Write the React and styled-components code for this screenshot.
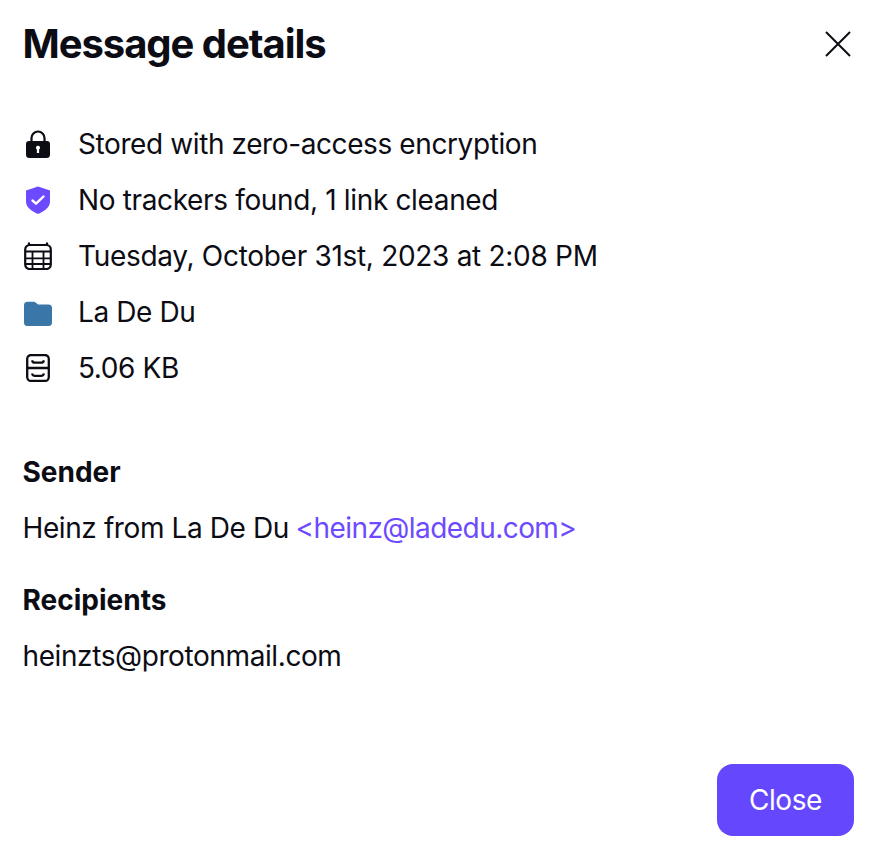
import React from "react"
import styled, { createGlobalStyle } from "styled-components"

const GlobalStyle = createGlobalStyle`
  html, body {
    margin: 0;
    padding: 0;
    background: #fff;
  }
`

const LockIcon = () => (
  <svg width="28" height="28" viewBox="0 0 28 28">
    <path d="M7.500 12V8a6.500 6.500 0 0 1 13 0v4" fill="none" stroke="#0c0c14" strokeWidth="2.200" />
    <path
      fillRule="evenodd"
      fill="#0c0c14"
      d="M5 11h18a3 3 0 0 1 3 3v10.500a3.500 3.500 0 0 1-3.500 3.500h-17A3.500 3.500 0 0 1 2 24.500V14a3 3 0 0 1 3-3zM14 15.800a2 2 0 0 0-1.100 3.700V23h2.200v-3.500A2 2 0 0 0 14 15.800z"
    />
  </svg>
)

const ShieldIcon = () => (
  <svg width="28" height="28" viewBox="0 0 28 28">
    <path fill="#6d4aff" d="M14 .5 26 4.500v11c0 6-6 10-12 12.500-6-2.500-12-6.500-12-12.500v-11z" />
    <path d="M8.500 14.500l3.500 3.200 7.500-7.200" fill="none" stroke="#fff" strokeWidth="2.400" strokeLinecap="round" strokeLinejoin="round" />
  </svg>
)

const CalendarIcon = () => (
  <svg width="28" height="28" viewBox="0 0 28 28" fill="none" stroke="#0c0c14" strokeWidth="2.200">
    <rect x="1.200" y="3" width="25.600" height="24" rx="4.500" />
    <path strokeWidth="1.800" d="M1.200 9.500h25.600M1.200 16.300h25.600M1.200 22h25.600M8.500 9.500V27M19.500 9.500V27" />
    <path d="M5 .5v3M23 .5v3" />
  </svg>
)

const FolderIcon = () => (
  <svg width="28" height="28" viewBox="0 0 28 28">
    <path
      fill="#3a77a8"
      d="M3.500 3.700h5.500c1.700 0 2.600.6 3.600 1.500l1.400 1.300h10.500a3.500 3.500 0 0 1 3.500 3.500v14.500a3.500 3.500 0 0 1-3.500 3.500h-21a3.500 3.500 0 0 1-3.500-3.500V7.200a3.500 3.500 0 0 1 3.500-3.500z"
    />
  </svg>
)

const DrawerIcon = () => (
  <svg width="28" height="28" viewBox="0 0 28 28" fill="none" stroke="#0c0c14" strokeWidth="2.300">
    <rect x="3.200" y="1" width="21.600" height="26" rx="4" />
    <path d="M3.200 14h21.600M8 6.300c.5 1.500 1.500 2.400 3 2.400h6c1.500 0 2.500-.9 3-2.400M8 19.500c.5 1.500 1.500 2.400 3 2.400h6c1.500 0 2.500-.9 3-2.400" />
  </svg>
)

const CloseIcon = () => (
  <svg width="26" height="26" viewBox="0 0 26 26" fill="none" stroke="#0c0c14" strokeWidth="2">
    <path d="M1 1l24 24M25 1L1 25" />
  </svg>
)

const details = [
  { icon: <LockIcon />, text: "Stored with zero-access encryption" },
  { icon: <ShieldIcon />, text: "No trackers found, 1 link cleaned", spacing: "-0.35px" },
  { icon: <CalendarIcon />, text: "Tuesday, October 31st, 2023 at 2:08 PM", spacing: "-0.3px" },
  { icon: <FolderIcon />, text: "La De Du" },
  { icon: <DrawerIcon />, text: "5.06 KB" },
]

export default function App() {
  return (
    <>
      <GlobalStyle />
      <Modal>
        <Header>
          <Title>Message details</Title>
          <IconButton aria-label="Close">
            <CloseIcon />
          </IconButton>
        </Header>
        <DetailList>
          {details.map((item) => (
            <DetailRow key={item.text} $spacing={item.spacing}>
              <IconSlot>{item.icon}</IconSlot>
              <span>{item.text}</span>
            </DetailRow>
          ))}
        </DetailList>
        <Section>
          <Label>Sender</Label>
          <Line>
            Heinz from La De Du <Address>&lt;heinz@ladedu.com&gt;</Address>
          </Line>
        </Section>
        <Section $gap="16px">
          <Label>Recipients</Label>
          <Line>heinzts@protonmail.com</Line>
        </Section>
        <Footer>
          <PrimaryButton>Close</PrimaryButton>
        </Footer>
      </Modal>
    </>
  )
}

const Modal = styled.div`
  box-sizing: border-box;
  width: 873px;
  height: 859px;
  padding: 16px 19px 23px 22.5px;
  display: flex;
  flex-direction: column;
  background: #fff;
  color: #0c0c14;
  font-family: Inter, "Liberation Sans", sans-serif;
  font-size: 28px;
  letter-spacing: -0.4px;
`
const Header = styled.div`
  display: flex;
  align-items: center;
  justify-content: space-between;
  height: 56px;
`
const Title = styled.h1`
  margin: 0;
  font-size: 40px;
  line-height: 56px;
  font-weight: 700;
  letter-spacing: -1.05px;
`
const IconButton = styled.button`
  display: flex;
  padding: 0;
  margin-right: 3px;
  border: 0;
  background: none;
`
const DetailList = styled.div`
  display: flex;
  flex-direction: column;
  margin-top: 44px;
`
const DetailRow = styled.div`
  display: flex;
  align-items: center;
  gap: 26px;
  height: 56px;
  line-height: 56px;
  letter-spacing: ${(props) => props.$spacing || "inherit"};
`
const IconSlot = styled.span`
  display: flex;
  width: 28px;
  height: 28px;
  margin-left: 1.5px;
`
const Section = styled.div`
  margin-top: ${(props) => props.$gap || "48px"};
`
const Label = styled.div`
  font-weight: 700;
  line-height: 56px;
  letter-spacing: 0;
`
const Line = styled.div`
  line-height: 56px;
`
const Address = styled.span`
  margin-left: -1px;
  color: #6d4aff;
  letter-spacing: -0.55px;
`
const Footer = styled.div`
  margin-top: auto;
  display: flex;
  justify-content: flex-end;
`
const PrimaryButton = styled.button`
  width: 137px;
  height: 72px;
  border: 0;
  border-radius: 16px;
  background: #6548fd;
  color: #fff;
  font-family: inherit;
  font-size: 28px;
  letter-spacing: -0.4px;
`
